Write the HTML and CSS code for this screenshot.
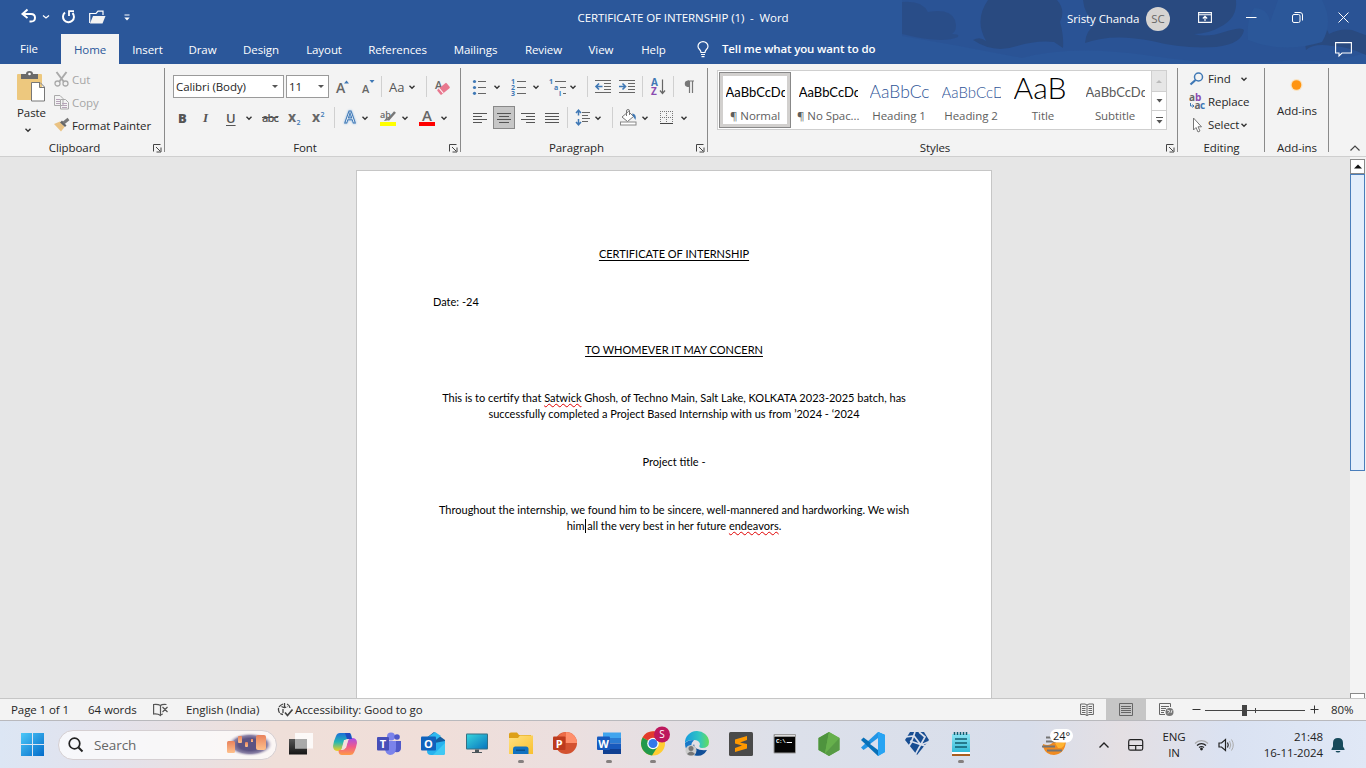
FILE: index.html
```html
<!DOCTYPE html>
<html lang="en">
<head>
<meta charset="utf-8">
<title>CERTIFICATE OF INTERNSHIP (1) - Word</title>
<link rel="stylesheet" href="styles.css">
</head>
<body>
<svg width="0" height="0" class="defs">
  <defs>
    <symbol id="chev" viewBox="0 0 8 8"><path d="M1.5 2.8 4 5.2 6.5 2.8" fill="none" stroke="#333" stroke-width="1.4"/></symbol>
    <symbol id="launch" viewBox="0 0 9 9"><path d="M.5 7.5V.5H7.5M3 3l4 4M8 3.5V8H3.5" fill="none" stroke="#444"/></symbol>
  </defs>
</svg>
<header class="header">
  <svg class="header-art" width="466" height="64" viewBox="0 0 466 64">
    <path d="M0 0H466V52Q430 64 390 60Q330 68 250 56T120 58Q60 46 0 36Z" fill="#2a5191" opacity=".55"/>
    <g fill="#294a80">
      <path d="M0 2Q20 0 26 12Q48 8 53 20Q56 30 50 34Q58 34 56 37Q40 44 0 34Z" opacity=".6"/>
      <path d="M86 0H155Q164 10 158 22Q162 36 161 48L152 42Q135 40 115 46Q92 54 71 40Q78 36 84 41Q72 20 86 0Z"/>
      <path d="M181 0H334Q336 18 318 27Q306 34 292 34Q305 38 322 32Q340 26 342 30Q340 44 314 47Q280 49 250 41Q210 33 183 43Q184 30 194 24Q182 14 181 0Z"/>
      <path d="M404 50Q400 30 416 26Q424 25 427 34Q438 28 450 30L466 36V56Q445 46 430 46Q412 43 404 50Z"/>
    </g>
    <path d="M376 0H420Q432 22 420 42Q380 54 346 40Q344 20 352 8Q366 8 368 22Z" fill="#2b5799"/>
  </svg>
  <div class="titlebar">
    <div class="quick">
      <svg width="16" height="16" viewBox="0 0 16 16"><path d="M2 5h8q4 0 4 3.800t-4 3.700H8.500" fill="none" stroke="#fff" stroke-width="2"/><path d="M6.500 .5 1.500 5l5 4" fill="none" stroke="#fff" stroke-width="2"/></svg>
      <svg width="8" height="8" viewBox="0 0 8 8"><path d="M1 2.500 4 5 7 2.500" fill="none" stroke="#fff" stroke-width="1.300"/></svg>
      <svg width="15" height="16" viewBox="0 0 15 16"><path d="M4 3.500A5.500 5.500 0 1 0 11.500 4" fill="none" stroke="#fff" stroke-width="2"/><path d="M8 7V2.200H13" fill="none" stroke="#fff" stroke-width="1.800"/></svg>
      <svg width="17" height="14" viewBox="0 0 17 14"><path d="M.7 13V3.500H7L9 1.200h5V5" fill="none" stroke="#fff" stroke-width="1.200"/><path d="M4 6h12.500L13.500 13.500H1Z" fill="#f3f3f3"/></svg>
      <svg width="6" height="7" viewBox="0 0 6 7"><path d="M.5 1H5.500" stroke="#fff"/><path d="M.3 3.500H5.700L3 6.500Z" fill="#fff"/></svg>
    </div>
    <div class="doc-title">CERTIFICATE OF INTERNSHIP (1)&nbsp; -&nbsp; Word</div>
    <div class="window">
      <span class="user">Sristy Chanda</span>
      <span class="avatar">SC</span>
      <svg width="14" height="11" viewBox="0 0 14 11"><path d="M.6 .6H13.400V10.400H.6ZM.6 2.800H13.400M7 9V4.500M4.800 6.500 7 4.300 9.200 6.500" fill="none" stroke="#fff" stroke-width="1.100"/></svg>
      <svg width="11" height="11" viewBox="0 0 11 11"><path d="M0 5.500H10.500" stroke="#fff"/></svg>
      <svg width="11" height="11" viewBox="0 0 11 11"><path d="M.5 4q0-1.500 1.500-1.500H6.500q1.500 0 1.500 1.500v5q0 1.500-1.500 1.500H2Q.5 10.500.5 9ZM2.500.5H8q2.500 0 2.500 2.500V8.500" fill="none" stroke="#fff"/></svg>
      <svg width="11" height="11" viewBox="0 0 11 11"><path d="M.5.5l10 10M10.500.5l-10 10" stroke="#fff"/></svg>
    </div>
  </div>
  <nav class="tabs">
    <span class="file">File</span><span class="active">Home</span><span>Insert</span><span>Draw</span><span>Design</span><span>Layout</span><span>References</span><span>Mailings</span><span>Review</span><span>View</span><span>Help</span>
    <svg class="bulb" width="12" height="17" viewBox="0 0 12 17"><path d="M4 11.500Q4 10 2.600 8.500Q1 7 1 5.300A5 4.600 0 0 1 11 5.300Q11 7 9.400 8.500Q8 10 8 11.500ZM4 13.500H8M4.500 15.700H7.500" fill="none" stroke="#fff" stroke-width="1.200"/></svg>
    <span class="tell">Tell me what you want to do</span>
    <svg class="comment" width="17" height="15" viewBox="0 0 17 15"><path d="M.6.600H16.400V11H7L4 14V11H.6Z" fill="none" stroke="#fff" stroke-width="1.100"/></svg>
  </nav>
</header>

<section class="ribbon">
  <div class="group clipboard">
    <div class="clip-body">
      <div class="paste">
        <svg width="29" height="31" viewBox="0 0 29 31"><rect y="3" width="25" height="26" rx="1" fill="#edc87e"/><path d="M4 3h5q0-3 3.500-3T16 3h5v5H4Z" fill="#6a6a6a"/><circle cx="12.500" cy="3" r="1.300" fill="#fff"/><path d="M14.500 11.500H23L27.500 16V30H14.500ZM22.500 11.500V16.500H27.500" fill="#fff" stroke="#777"/></svg>
        <span>Paste</span>
        <svg width="8" height="8"><use href="#chev"/></svg>
      </div>
      <div class="clip-list">
        <div class="off"><svg width="15" height="15" viewBox="0 0 15 15"><path d="M2.500 0 10 10M12.500 0 5 10" stroke="#aaa" stroke-width="2"/><circle cx="3.500" cy="11.500" r="2.500" fill="none" stroke="#aaa" stroke-width="1.300"/><circle cx="11.500" cy="11.500" r="2.500" fill="none" stroke="#aaa" stroke-width="1.300"/></svg><span>Cut</span></div>
        <div class="off"><svg width="16" height="15" viewBox="0 0 16 15"><path d="M.5.500H6L9 3.500V10.500H.5ZM6.500 4.500H11.500L14.500 7.500V14H6.500Z" fill="#f3f3f3" stroke="#aaa"/><path d="M2 4.500h4M2 6.500h4M2 8.500h4M8 8.500h5M8 10.500h5M8 12.500h5" stroke="#b7a4b9"/></svg><span>Copy</span></div>
        <div><svg width="16" height="15" viewBox="0 0 16 15"><path d="M0 6 6 3.500 10.500 9 7 13.500Z" fill="#eac282"/><path d="M6 4.500 8 2.500 12.500 7.500 11 9Z" fill="#666"/><path d="M9.500 5 14.500 1" stroke="#777" stroke-width="3"/></svg><span>Format Painter</span></div>
      </div>
    </div>
    <div class="label">Clipboard</div><svg class="launcher" width="9" height="9"><use href="#launch"/></svg>
  </div>

  <div class="group font">
    <div class="tools">
      <div class="row font-one">
        <div class="combo">Calibri (Body)<i></i></div>
        <div class="combo size">11<i></i></div>
        <svg width="14" height="16" viewBox="0 0 14 16"><text x="0" y="14" class="g g13">A</text><path d="M8 4.500h5L10.500 1.500Z" fill="#3f78b5"/></svg>
        <svg width="14" height="16" viewBox="0 0 14 16"><text x="1" y="14" class="g g11">A</text><path d="M8.500 1h5L11 4Z" fill="#3f78b5"/></svg>
        <b class="sep"></b>
        <span class="aa">Aa</span>
        <svg width="8" height="8"><use href="#chev"/></svg>
        <b class="sep"></b>
        <svg width="16" height="16" viewBox="0 0 16 16"><text x="1" y="10" class="g g11">A</text><g transform="rotate(-40 9 10)"><rect x="3.500" y="7" width="12" height="6.500" rx="1" fill="#e8788f"/><path d="M6.500 7V13.500" stroke="#fff"/></g></svg>
      </div>
      <div class="row font-two">
        <span class="bold">B</span><span class="ital">I</span><span class="under">U</span>
        <svg width="8" height="8"><use href="#chev"/></svg>
        <span class="strike">abc</span>
        <svg width="14" height="16" viewBox="0 0 14 16"><text x="0" y="12" class="g g13 gb">x</text><text x="8.500" y="15" class="g g7">2</text></svg>
        <svg width="14" height="16" viewBox="0 0 14 16"><text x="0" y="12" class="g g13 gb">x</text><text x="8.500" y="7" class="g g7">2</text></svg>
        <b class="sep"></b>
        <svg width="16" height="18" viewBox="0 0 16 18"><text x="2.800" y="14" class="effect">A</text></svg>
        <svg width="8" height="8"><use href="#chev"/></svg>
        <svg width="17" height="18" viewBox="0 0 17 18"><text x="0" y="9" class="g g9">ab</text><path d="M15 3 8 11" stroke="#777" stroke-width="2.500"/><path d="M4 12 6.500 8.500 9.500 11Z" fill="#777"/><rect y="13" width="16" height="4" fill="#ff0"/></svg>
        <svg width="8" height="8"><use href="#chev"/></svg>
        <svg width="17" height="18" viewBox="0 0 17 18"><text x="3" y="12" class="g g15">A</text><rect y="13" width="16" height="4" fill="red"/></svg>
        <svg width="8" height="8"><use href="#chev"/></svg>
      </div>
    </div>
    <div class="label">Font</div><svg class="launcher" width="9" height="9"><use href="#launch"/></svg>
  </div>

  <div class="group para">
    <div class="tools">
      <div class="row para-one">
        <svg width="16" height="16" viewBox="0 0 16 16"><path d="M6 2.500H14M6 8.500H14M6 14.500H14" stroke="#666"/><g fill="#3f78b5"><circle cx="2.500" cy="2.500" r="1.600"/><circle cx="2.500" cy="8.500" r="1.600"/><circle cx="2.500" cy="14.300" r="1.600"/></g></svg>
        <svg width="8" height="8"><use href="#chev"/></svg>
        <svg width="16" height="18" viewBox="0 0 16 18"><path d="M6 3.500H15M6 9.500H15M6 15.500H15" stroke="#666"/><g class="num"><text x="0" y="6">1</text><text x="0" y="12">2</text><text x="0" y="18">3</text></g></svg>
        <svg width="8" height="8"><use href="#chev"/></svg>
        <svg width="18" height="18" viewBox="0 0 18 18"><path d="M6 3.500H17M11 9.500H17M14 15.500H17" stroke="#666"/><g class="num"><text x="0" y="6">1</text><text x="5" y="12">a</text><text x="10" y="18">i</text></g></svg>
        <svg width="8" height="8"><use href="#chev"/></svg>
        <b class="sep"></b>
        <svg width="17" height="14" viewBox="0 0 17 14"><path d="M0 .5H16M9 3.500H16M9 6.500H16M9 9.500H16M0 12.500H16" stroke="#666"/><path d="M7.500 6.500H1.500M4 3.500 1 6.500 4 9.500" fill="none" stroke="#3f78b5" stroke-width="1.600"/></svg>
        <svg width="17" height="14" viewBox="0 0 17 14"><path d="M0 .5H16M9 3.500H16M9 6.500H16M9 9.500H16M0 12.500H16" stroke="#666"/><path d="M0 6.500H6M3.500 3.500 6.500 6.500 3.500 9.500" fill="none" stroke="#3f78b5" stroke-width="1.600"/></svg>
        <b class="sep"></b>
        <svg width="16" height="18" viewBox="0 0 16 18"><text x="0" y="8" class="sort-a">A</text><text x="0" y="17" class="sort-z">Z</text><path d="M11.500 1.500V15.500M9 12.500 11.500 15.500 14 12.500" fill="none" stroke="#666" stroke-width="1.200"/></svg>
        <b class="sep"></b>
        <svg width="12" height="14" viewBox="0 0 12 14"><path d="M6.500 1V13M9.500 1V13M5 1H11" stroke="#777" stroke-width="1.200"/><path d="M6 .5H4.500A3.300 3.300 0 0 0 4.500 7H6Z" fill="#777"/></svg>
      </div>
      <div class="row para-two">
        <svg width="16" height="12" viewBox="0 0 16 12"><path d="M1 1.500H15M1 4.500H10M1 7.500H15M1 10.500H10" stroke="#555"/></svg>
        <span class="pressed"><svg width="16" height="12" viewBox="0 0 16 12"><path d="M1 1.500H15M3 4.500H13M1 7.500H15M3 10.500H13" stroke="#555"/></svg></span>
        <svg width="16" height="12" viewBox="0 0 16 12"><path d="M1 1.500H15M6 4.500H15M1 7.500H15M6 10.500H15" stroke="#555"/></svg>
        <svg width="16" height="12" viewBox="0 0 16 12"><path d="M1 1.500H15M1 4.500H15M1 7.500H15M1 10.500H15" stroke="#555"/></svg>
        <b class="sep"></b>
        <svg width="16" height="17" viewBox="0 0 16 17"><path d="M7 3.500H15M7 6.500H13M7 9.500H15M7 12.500H13" stroke="#666"/><path d="M3.500 1.500V6.500M1 4 3.500 1.200 6 4M3.500 10V15.500M1 13 3.500 15.800 6 13" fill="none" stroke="#3f78b5" stroke-width="1.500"/></svg>
        <svg width="8" height="8"><use href="#chev"/></svg>
        <b class="sep"></b>
        <svg width="17" height="17" viewBox="0 0 17 17"><path d="M2 8 8.500 2.500 13.500 7.500 7.500 12.500Z" fill="#fff" stroke="#777"/><path d="M6.500 7V2Q6.500 .5 8 .5T9.500 2V6" fill="none" stroke="#777"/><path d="M12 4.500Q17 5 15.500 11L13.500 8Z" fill="#3f78b5"/><rect x=".5" y="13" width="15.500" height="3" fill="#fff" stroke="#888"/></svg>
        <svg width="8" height="8"><use href="#chev"/></svg>
        <svg width="15" height="15" viewBox="0 0 15 15"><path d="M1 1.500H14M1 7.500H14M1.500 1V13M7.500 1V13M13.500 1V13" stroke="#777" stroke-dasharray="1 1"/><path d="M1 13.500H14" stroke="#444"/></svg>
        <svg width="8" height="8"><use href="#chev"/></svg>
      </div>
    </div>
    <div class="label">Paragraph</div><svg class="launcher" width="9" height="9"><use href="#launch"/></svg>
  </div>

  <div class="group styles">
    <div class="gallery">
      <div class="style chosen"><p>AaBbCcDd</p><span>¶ Normal</span></div>
      <div class="style"><p>AaBbCcDd</p><span>¶ No Spac...</span></div>
      <div class="style h1"><p>AaBbCc</p><span>Heading 1</span></div>
      <div class="style h2"><p>AaBbCcD</p><span>Heading 2</span></div>
      <div class="style ttl"><p>AaB</p><span>Title</span></div>
      <div class="style sub"><p>AaBbCcDd</p><span>Subtitle</span></div>
      <div class="gal-scroll">
        <span class="dim"><svg width="7" height="4" viewBox="0 0 7 4"><path d="M0 4H6L3 1Z" fill="#bbb"/></svg></span>
        <span><svg width="7" height="4" viewBox="0 0 7 4"><path d="M.5 0H6.500L3.500 3.500Z" fill="#555"/></svg></span>
        <span><svg width="7" height="7" viewBox="0 0 7 7"><path d="M0 .5H7" stroke="#555"/><path d="M.5 3H6.500L3.500 6.500Z" fill="#555"/></svg></span>
      </div>
    </div>
    <div class="label">Styles</div><svg class="launcher" width="9" height="9"><use href="#launch"/></svg>
  </div>

  <div class="group editing">
    <div class="edit-list">
      <div><svg width="16" height="14" viewBox="0 0 16 14"><circle cx="9.500" cy="5" r="4" fill="none" stroke="#3f78b5" stroke-width="1.500"/><path d="M6.500 8 1.500 12.500" stroke="#3f78b5" stroke-width="2.200"/></svg><span>Find</span><svg width="8" height="8"><use href="#chev"/></svg></div>
      <div><svg width="17" height="18" viewBox="0 0 17 18"><text x="0" y="8" class="g g10 gb">a</text><text x="6" y="8" class="rb">b</text><text x="5.500" y="16" class="g g10 gb">a</text><text x="11" y="16" class="rc">c</text><path d="M1.500 10V13H5M3.500 11.500 5 13 3.500 14.500" fill="none" stroke="#3f78b5"/></svg><span>Replace</span></div>
      <div><svg width="16" height="16" viewBox="0 0 16 16"><path d="M4.500 1V13L7 10.500 9 15 11 14 9 9.800H12.500Z" fill="#fff" stroke="#777"/></svg><span>Select</span><svg width="8" height="8"><use href="#chev"/></svg></div>
    </div>
    <div class="label">Editing</div>
  </div>

  <div class="group addins">
    <div class="add"><svg width="14" height="14" viewBox="0 0 14 14"><circle cx="6.500" cy="7" r="6" fill="#ffd28a" opacity=".5"/><circle cx="6.500" cy="7" r="4.800" fill="#ff9410"/></svg><span>Add-ins</span></div>
    <div class="label">Add-ins</div>
  </div>
  <div class="collapse"><svg width="12" height="8" viewBox="0 0 12 8"><path d="M1.500 6.500 6 2 10.500 6.500" fill="none" stroke="#444" stroke-width="1.200"/></svg></div>
</section>

<main class="work">
  <article class="page">
    <p class="c"><u class="l1">CERTIFICATE OF INTERNSHIP</u></p>
    <p class="l2">Date: -24</p>
    <p class="c"><u class="l3">TO WHOMEVER IT MAY CONCERN</u></p>
    <p class="c"><span class="l4">This is to certify that <span class="err">Satwick</span> Ghosh, of Techno Main, Salt Lake, KOLKATA 2023-2025 batch, has</span><br><span class="l5">successfully completed a Project Based Internship with us from ’2024 - ‘2024</span></p>
    <p class="c"><span class="l6">Project title -</span></p>
    <p class="c"><span class="l7">Throughout the internship, we found him to be sincere, well-mannered and hardworking. We wish</span><br><span class="l8">him<i class="caret"></i> all the very best in her future <span class="err">endeavors</span>.</span></p>
  </article>
  <div class="scroll">
    <span class="arrow"><svg width="8" height="5" viewBox="0 0 8 5"><path d="M0 4.500H8L4 .5Z" fill="#111"/></svg></span>
    <span class="thumb"></span>
    <span class="arrow"><svg width="8" height="5" viewBox="0 0 8 5"><path d="M0 .5H8L4 4.500Z" fill="#111"/></svg></span>
  </div>
</main>

<footer class="status">
  <span class="s1">Page 1 of 1</span><span class="s2">64 words</span>
  <svg width="16" height="14" viewBox="0 0 16 14"><path d="M7.500 2.500V12.500M7.500 2.500Q5 1 .6 1.500V11Q5 10.500 7.500 12.500Q8.500 11 10 11M7.500 2.500Q9 1 13.500 1.500M9.500 4 14.500 9M14.500 4 9.500 9" fill="none" stroke="#555" stroke-width="1.200"/></svg>
  <span class="s3">English (India)</span>
  <svg width="17" height="16" viewBox="0 0 17 16"><path d="M6 2Q1 4 1.500 8T6 12.500M10 2Q12.500 3 13 6M7.500 1V6M4.500 4.500Q7.500 6.500 10.500 4.500M6 11V7" fill="none" stroke="#444" stroke-width="1.300" stroke-dasharray="5 1"/><path d="M8 10.500 10.500 13.500 15.500 7.500" fill="none" stroke="#444" stroke-width="1.700"/></svg>
  <span class="s4">Accessibility: Good to go</span>
  <svg width="14" height="14" viewBox="0 0 14 14"><path d="M7 2V13M.6 1H5L7 2 9 1H13.400V11.500H9L7 12.500 5 11.500H.6ZM2 3.500H5.500M2 5.500H5.500M2 7.500H5.500M2 9.500H5.500M8.500 3.500H12M8.500 5.500H12M8.500 7.500H12M8.500 9.500H12" fill="none" stroke="#666"/></svg>
  <span class="view"><svg width="14" height="14" viewBox="0 0 14 14"><path d="M.5.500H13.500V12.500H.5ZM2 3.500H12M2 5.500H12M2 7.500H12M2 9.500H12" fill="none" stroke="#666"/></svg></span>
  <svg width="15" height="14" viewBox="0 0 15 14"><path d="M6 11.500H.5V.5H11.500V4M2 3.500H10M2 5.500H7M2 7.500H6M2 9.500H5" fill="none" stroke="#666"/><circle cx="10.500" cy="9" r="4" fill="#777"/><path d="M8 7 11 8 9 10.500M13 7 12 10" stroke="#ddd" fill="none"/></svg>
  <svg width="9" height="9" viewBox="0 0 9 9"><path d="M.5 4.500H8.500" stroke="#333"/></svg>
  <svg width="101" height="12" viewBox="0 0 101 12"><path d="M0 6.500H100M50.500 4V9" stroke="#444"/><rect x="37" y="1" width="5" height="11" fill="#444"/></svg>
  <svg width="9" height="9" viewBox="0 0 9 9"><path d="M.5 4.500H8.500M4.500.5V8.500" stroke="#333"/></svg>
  <span class="s5">80%</span>
</footer>

<div class="taskbar">
  <svg class="start" width="24" height="24" viewBox="0 0 24 24"><defs><linearGradient id="wg" x1="0" y1="0" x2="24" y2="24" gradientUnits="userSpaceOnUse"><stop stop-color="#4cc8f8"/><stop offset="1" stop-color="#0067c8"/></linearGradient></defs><path d="M0 0h11v11H0ZM12 0h11v11H12ZM0 12h11v11H0ZM12 12h11v11H12Z" fill="url(#wg)"/></svg>
  <div class="search">
    <svg width="16" height="16" viewBox="0 0 16 16"><circle cx="6.500" cy="6.500" r="5.300" fill="none" stroke="#222" stroke-width="1.700"/><path d="M10.500 10.500 14.500 14.500" stroke="#222" stroke-width="1.900"/></svg>
    <span>Search</span>
    <svg class="lantern" width="48" height="26" viewBox="0 0 48 26"><defs><radialGradient id="ng"><stop offset=".5" stop-color="#5d5382"/><stop offset=".75" stop-color="#8b82a6"/><stop offset="1" stop-color="#f6f0f0" stop-opacity="0"/></radialGradient><linearGradient id="lg" x2="0" y2="1"><stop stop-color="#e8825c"/><stop offset="1" stop-color="#ffc18c"/></linearGradient></defs><ellipse cx="25" cy="12.500" rx="23" ry="12" fill="url(#ng)"/><g fill="url(#lg)"><rect x="2" y="9" width="8" height="12" rx="1.500"/><rect x="13" y="4" width="4" height="7" rx="1"/><rect x="20" y="10" width="3" height="5" rx="1"/><rect x="26" y="7" width="2" height="3"/><rect x="31" y="3" width="10" height="15" rx="2"/></g></svg>
  </div>
  <div class="apps">
    <svg viewBox="0 0 24 24"><defs><linearGradient id="tv" x2="0" y2="1"><stop stop-color="#555"/><stop offset="1" stop-color="#151515"/></linearGradient></defs><rect y="7" width="18" height="15.500" fill="url(#tv)"/><rect x="6" y="1" width="18" height="15.500" fill="#fff" opacity=".8"/><path d="M6 7H18V16.500H6Z" fill="#999" opacity=".75"/></svg>
    <svg viewBox="0 0 24 24"><defs><linearGradient id="c1" x2="0" y2="1"><stop stop-color="#1c6fd8"/><stop offset=".5" stop-color="#25b7b4"/><stop offset="1" stop-color="#f2cf20"/></linearGradient><linearGradient id="c2" x2="0" y2="1"><stop stop-color="#a64fe8"/><stop offset=".5" stop-color="#ef5a8c"/><stop offset="1" stop-color="#ff9a45"/></linearGradient></defs><path d="M7 1H16Q18 1 18.500 4L19 7H14Q12 7 11 10L9 16Q8 19 5 19Q0 19 0 14Q1 8 3 4Q4 1 7 1Z" fill="url(#c1)"/><path d="M17 23H9Q6 23 5.500 19.500L6 18H10Q12 18 13 15L15 9Q16 6 19 6Q24 6 24 11Q23 17 21 20.500Q20 23 17 23Z" fill="url(#c2)"/><path d="M11 8H15L13 16H9Z" fill="#f4e1dc"/><path d="M12 1H17L19 7H14Z" fill="#224bc0"/></svg>
    <svg viewBox="0 0 24 24"><circle cx="14" cy="4.500" r="4" fill="#7b83eb"/><circle cx="20" cy="5" r="2.800" fill="#5059c9"/><path d="M15 9H24V16Q24 21 18 20Z" fill="#5059c9"/><path d="M8 9H19V16Q19 23 13 23Q8 22 8 16Z" fill="#7b83eb"/><rect y="5" width="12" height="13.500" rx="1" fill="#464eb8"/><text x="6" y="16" class="tile">T</text></svg>
    <svg viewBox="0 0 24 24"><path d="M4 7 13 0 24 8V12L14 17Z" fill="#155d9f"/><path d="M7 5 14 0 20 4 12 10Z" fill="#2fb9ef"/><path d="M8 12 24 9V21Q24 23 22 23H10Q6 23 6 19Z" fill="#28b2ee"/><path d="M24 11V21Q24 23 22 23H12Z" fill="#40c9f4"/><rect y="4.500" width="15" height="14" rx="1" fill="#0f62bd"/><text x="7.500" y="16" class="tile">O</text></svg>
    <svg viewBox="0 0 24 24"><defs><linearGradient id="mo" x2="1" y2="1"><stop stop-color="#38d4dc"/><stop offset="1" stop-color="#0876bf"/></linearGradient></defs><rect x="1" y="1.500" width="22" height="16" rx="1" fill="#356f83"/><rect x="2" y="2.500" width="20" height="14" fill="url(#mo)"/><path d="M10 17.500h4v2.500h3v1H7v-1h3Z" fill="#4b555a"/></svg>
    <svg viewBox="0 0 24 24"><defs><linearGradient id="fo" x2="1" y2="1"><stop stop-color="#ffe180"/><stop offset="1" stop-color="#f9c02f"/></linearGradient></defs><path d="M0 2Q0 .5 2 .5H8L10 3H22V8H0Z" fill="#dda018"/><path d="M0 6H9L11 3.500H24V22H0Z" fill="url(#fo)"/><path d="M4 22V17Q4 14.500 6 14.500H17Q19.500 14.500 19.500 17V22Z" fill="#1272c0"/><path d="M7 17.500H16V19H7Z" fill="#0b528e"/></svg>
    <svg viewBox="0 0 24 24"><circle cx="13" cy="11" r="11" fill="#d35230"/><path d="M13 0A11 11 0 0 1 24 11H13Z" fill="#ff8f6b"/><path d="M13 0V11H3A11 11 0 0 1 13 0Z" fill="#ed6c47"/><rect y="4.500" width="12.500" height="13.500" rx="1" fill="#bd3b1e"/><text x="6.300" y="16" class="tile">P</text></svg>
    <svg viewBox="0 0 24 24"><path d="M6 .5H24V6H6Z" fill="#41a5ee"/><path d="M6 6H24V11.500H6Z" fill="#2b7cd3"/><path d="M6 11.500H24V17H6Z" fill="#185abd"/><path d="M6 17H24V22H6Z" fill="#103f91"/><rect y="4.500" width="13" height="13.500" rx="1" fill="#185abd"/><text x="6.500" y="15.700" class="tile">W</text></svg>
    <svg viewBox="0 0 24 24"><circle cx="12" cy="11.500" r="12" fill="#ffcd32"/><path d="M12 11.500 1.600 5.500A12 12 0 0 1 23 6H12Z" fill="#e33b2e"/><path d="M12 11.500 1.600 5.500A12 12 0 0 0 11 23.500L17 14Z" fill="#21994b"/><circle cx="12" cy="11.500" r="5.800" fill="#fff"/><circle cx="12" cy="11.500" r="4.500" fill="#3378e8"/><circle cx="21" cy="2.500" r="8" fill="#bd185d"/><text x="21" y="6.300" class="badge">S</text></svg>
    <svg viewBox="0 0 24 24"><defs><linearGradient id="eg"><stop stop-color="#169bdf"/><stop offset=".6" stop-color="#31c6c1"/><stop offset="1" stop-color="#65dc5b"/></linearGradient></defs><path d="M0 11A12 11.500 0 0 1 24 10Q24 16 17 16Q13 16 15 12Q14 8 9 8Q2 8 0 11Z" fill="url(#eg)"/><path d="M0 11Q3 8 9 8Q4 13 8 20L12 24Q0 22 0 11Z" fill="#1878c8"/><path d="M9 12Q9 19 22 18Q18 25 11 23.500Q4 20 9 12Z" fill="#114f98"/><circle cx="6" cy="18.500" r="5.500" fill="#ccc"/><circle cx="6" cy="16.500" r="2.500" fill="#777"/><path d="M2 22Q6 17 10 22Q6 25 2 22Z" fill="#777"/></svg>
    <svg viewBox="0 0 24 24"><rect width="24" height="24" rx="1.500" fill="#4a4a4a"/><path d="M18 4V8L11 10.500 18 12V16.500L6 20V16L13 13.500 6 11.500V7.500Z" fill="#ff9800"/></svg>
    <svg viewBox="0 0 24 24"><rect x=".5" y="2" width="22.500" height="19.500" rx="1" fill="#999"/><rect x="1.500" y="5" width="20.500" height="15.500" fill="#050505"/><path d="M2 3.500H22" stroke="#ddd"/><text x="3" y="11" class="prompt">C:\.</text><path d="M14 10.500H19" stroke="#fff"/></svg>
    <svg viewBox="0 0 24 24"><path d="M12 0 22.500 6V18L12 24 1.500 18V6Z" fill="#6aaf50"/><path d="M12 0 1.500 6V18L8 21.500Z" fill="#4e943e"/><path d="M12 0 22.500 6 8 21.500Z" fill="#66b04c"/><path d="M22.500 6V18L12 24 8 21.500Z" fill="#579b45"/></svg>
    <svg viewBox="0 0 24 24"><path d="M17 0 24 3V20L17 24Z" fill="#28a4f3"/><path d="M17 0 24 3 2.500 18 0 15.500Z" fill="#2295e6"/><path d="M2.500 5.500 20 18.500 17 24 0 8Z" fill="#0870b8"/><path d="M17 6V18L9 12Z" fill="#d9dfee"/><path d="M17 0 24 3V20L17 24Z" fill="#28a4f3"/></svg>
    <svg viewBox="0 0 24 24"><path d="M5 0H19L24 8 12 23 0 8Z" fill="#174d92"/><path d="M0 5 9 4 16 13 23 10M10 0 6 11 4 14M14 0 20 5 10 23M5 9 20 14" fill="none" stroke="#d9dfec" stroke-width="1.700"/></svg>
    <svg viewBox="0 0 24 24"><defs><linearGradient id="np" x2="0" y2="1"><stop stop-color="#8be4f3"/><stop offset="1" stop-color="#2db9d7"/></linearGradient></defs><path d="M3 2H21V21H3Z" fill="url(#np)"/><path d="M5.500 0V3M8.500 0V3M11.500 0V3M14.500 0V3M17.500 0V3M6 7H18M6 11H18M6 15H18" stroke="#125d70" stroke-width="1.500"/><path d="M3 20H21V22H3Z" fill="#fff"/><path d="M3 22H21V24H3Z" fill="#a95e20"/></svg>
    <i class="dot d6"></i><i class="dot d8"></i><i class="dot d9"></i><i class="dot d16"></i>
  </div>
  <div class="tray">
    <svg width="32" height="32" viewBox="0 0 32 32"><path d="M1 15Q8 18 12 12 17 8 24 12Q23 25 12 26Q4 26 1 18Z" fill="#f08b21"/><path d="M13 14Q20 14 23 12Q23 20 16 19Z" fill="#ffb431"/><path d="M4 8.500H14M4 12.500H14M0 17.500H13M5 21.500H20" stroke="#747474" stroke-width="2"/><rect x="8" y="0" width="23" height="13.500" rx="6.500" fill="#fff"/><text x="19.500" y="11" class="temp">24°</text></svg>
    <svg width="12" height="8" viewBox="0 0 12 8"><path d="M1.500 6.500 6 2 10.500 6.500" fill="none" stroke="#222" stroke-width="1.400"/></svg>
    <svg width="16" height="12" viewBox="0 0 16 12"><rect x=".7" y=".7" width="14" height="10.500" rx="1.800" fill="none" stroke="#222" stroke-width="1.200"/><path d="M.7 6.500H14.700M7.700 6.500V11" stroke="#222" stroke-width="1.200"/></svg>
    <span class="lang">ENG<br>IN</span>
    <svg width="16" height="14" viewBox="0 0 16 14"><g fill="none" stroke-width="1.200"><path d="M1 5.500A9 9 0 0 1 14 5.500" stroke="#aaa"/><path d="M3 7.500A6.500 6.500 0 0 1 12 7.500M5 9.500A4 4 0 0 1 10 9.500" stroke="#222"/></g><circle cx="7.500" cy="11" r="1.400" fill="#222"/></svg>
    <svg width="17" height="14" viewBox="0 0 17 14"><path d="M1 5H3.500L7.500 1.500V12.500L3.500 9H1ZM9.500 4.500Q11 7 9.500 9.500" fill="none" stroke="#222" stroke-width="1.200"/><path d="M11.500 3Q14 7 11.500 11M13.500 1.500Q17 7 13.500 12.500" fill="none" stroke="#aaa"/></svg>
    <span class="clock">21:48<br>16-11-2024</span>
    <svg width="14" height="16" viewBox="0 0 14 16"><path d="M2 6Q2 1 7 1T12 6V9.500L13.500 12V13H.5V12L2 9.500ZM4.500 14H9.500Q9 15.500 7 15.500T4.500 14Z" fill="#174a5b"/></svg>
  </div>
</div>
</body>
</html>
```
FILE: styles.css
```css
* { box-sizing: border-box; }
body { margin: 0; width: 1366px; height: 768px; overflow: hidden; display: grid; grid-template-rows: 64px 93px 541px 22px 48px; font: 11.5px/16px "Open Sans", "Noto Sans", sans-serif; letter-spacing: -.08px; color: #262626; background: #e6e6e6; }
svg { display: block; flex: none; overflow: visible; }
p { margin: 0; }
.defs { position: absolute; }

/* Header */
.header { position: relative; background: #2b579a; color: #fff; display: grid; grid-template-rows: 34px 30px; }
.header-art { position: absolute; right: 0; top: 0; }
.titlebar { position: relative; display: grid; grid-template-columns: 576px 214px 1fr; align-items: center; }
.quick { display: grid; grid-template-columns: 21px 19px 28px 35px auto; padding-left: 21px; align-items: center; }
.doc-title { text-align: center; white-space: nowrap; padding-top: 2px; }
.window { display: grid; grid-template-columns: 79px 52px 48px 46px 46px auto; padding-left: 277px; align-items: center; height: 30px; }
.user, .avatar { position: relative; top: 2px; white-space: nowrap; }
.avatar { width: 24px; height: 24px; border-radius: 50%; background: #d6d4d2; color: #666; text-align: center; line-height: 24px; }
.tabs { position: relative; display: grid; grid-template-columns: 61px 58px 57px 53px 64px 62px 85px 71px 65px 50px 55px 16px 25px 613px auto; line-height: 31px; text-align: center; }
.file { padding-right: 3px; line-height: 29px; }
.active { background: #f3f3f3; color: #2b579a; }
.bulb { align-self: center; grid-column: 13; margin-left: 0; }
.tell { grid-column: 14; text-align: left; font-weight: 600; line-height: 29px; letter-spacing: -.14px; }
.tabs .bulb { grid-column: 13; }
.comment { align-self: center; }

/* Ribbon */
.ribbon { background: #f3f3f3; border-bottom: 1px solid #cfcfcf; display: grid; grid-template-columns: 165px 296px 247px 470px 87px 64px 39px; }
.group { position: relative; display: grid; grid-template-rows: 76px 16px; }
.group::after { content: ""; position: absolute; right: 0; top: 4px; width: 1px; height: 84px; background: #8a8a8a; }
.label { text-align: center; padding-right: 16px; }
.editing .label, .addins .label { padding-right: 0; }
.launcher { position: absolute; right: 3px; top: 80px; }
.clip-body { display: grid; grid-template-columns: 37px auto; padding: 7px 0 0 17px; }
.paste { display: grid; grid-template-rows: 34px 18px 10px; width: 29px; }
.paste span { justify-self: center; margin-right: 5px; }
.paste svg:last-child { margin: 3px 0 0 7px; }
.clip-list { display: grid; grid-template-rows: 23px 23px 23px; height: 69px; margin-top: -3px; white-space: nowrap; }
.clip-list div { display: grid; grid-template-columns: 18px auto; align-items: center; }
.off { color: #a6a6a6; }
.tools { display: grid; grid-template-rows: 29px 33px; padding-top: 8px; }
.row { display: grid; align-items: center; justify-items: start; white-space: nowrap; }
.font-one { grid-template-columns: 113px 50px 25px 20px 8px 19px 18px 8px 20px; padding-left: 8px; }
.font-two { grid-template-columns: 25px 23px 19px 17px 26px 24px 22px 8px 19px 19px 21px 18px 21px 8px; padding-left: 13px; }
.para-one { grid-template-columns: 21px 18px 21px 17px 20px 18px 8px 24px 23px 9px 22px 10px 14px; padding-left: 11px; }
.para-two { grid-template-columns: 21px 27px 24px 23px 8px 19px 18px 8px 21px 18px 21px 8px; padding-left: 11px; }
.sep { width: 1px; height: 21px; background: #d0d0d0; }
.combo { width: 111px; height: 23px; border: 1px solid #9a9a9a; background: #fff; padding: 0 5px 0 2px; display: flex; align-items: center; justify-content: space-between; }
.combo i { border: 3px solid transparent; border-top-color: #555; border-bottom: 0; }
.size { width: 43px; padding-right: 4px; letter-spacing: 0; }
.g { fill: #666; font-weight: 600; letter-spacing: 0; }
.g13 { font-size: 14px; } .g11 { font-size: 11px; } .g15 { font-size: 15px; } .g9 { font-size: 9px; } .g10 { font-size: 10px; }
.g7 { font-size: 7px; fill: #3f78b5; } .gb { font-weight: 700; }
.aa { font-size: 13px; color: #555; }
.bold { font-weight: 800; font-size: 13px; color: #555; }
.ital { font: italic bold 13px "Liberation Serif", serif; color: #555; }
.under { font-weight: 600; font-size: 13px; color: #555; text-decoration: underline; text-underline-offset: 2px; }
.strike { font-weight: 600; font-size: 11px; letter-spacing: -.9px; color: #555; text-decoration: line-through; }
.effect { font-size: 16px; font-weight: 600; fill: #fff; stroke: #3f78b5; stroke-width: 1; filter: drop-shadow(0 0 1px #8cb8e4); }
.num { font-size: 7px; font-weight: 700; fill: #3f78b5; }
.sort-a { font-size: 10px; font-weight: 700; fill: #3f78b5; }
.sort-z { font-size: 10px; font-weight: 700; fill: #8a4bb0; }
.pressed { width: 22px; height: 23px; background: #c6c6c6; border: 1px solid #888; display: grid; place-items: center; }
.gallery { display: grid; grid-template-columns: repeat(6, 72px) 15px; width: 450px; height: 60px; margin: 6px 0 0 9px; background: #fff; border: 1px solid #cfcfcf; padding-left: 1px; }
.style { display: grid; grid-template-rows: 34px 18px; height: 56px; margin-top: 1px; padding: 2px 6px; justify-items: center; white-space: nowrap; color: #5e5e5e; }
.style p { width: 59px; overflow: hidden; font: 13px/36px Lato, sans-serif; color: #000; letter-spacing: 0; height: 34px; }
.chosen { box-shadow: inset 0 0 0 1px #888, inset 0 0 0 4px #d2d0ce; }
.h1 p { font-size: 17.5px; font-weight: 300; color: #2f5597; }
.h2 p { font-size: 15px; font-weight: 300; color: #2f5597; }
.ttl p { font-size: 30px; font-weight: 300; line-height: 26px; }
.sub p { color: #5a5a5a; }
.gal-scroll { display: grid; grid-template-rows: 20px 19px 19px; border-left: 1px solid #cfcfcf; }
.gal-scroll span { display: grid; place-items: center; }
.gal-scroll span + span { border-top: 1px solid #cfcfcf; }
.dim { background: #e6e6e6; }
.edit-list { display: grid; grid-template-rows: repeat(3, 23px); height: 69px; padding: 3px 0 0 11px; }
.edit-list div { display: grid; grid-template-columns: 19px 32px auto; align-items: center; }
.edit-list div:first-child svg:last-child { margin-left: 0; }
.rb, .rc { font-size: 10px; font-weight: 700; fill: #8a4bb0; } .rc { fill: #3f78b5; }
.add { display: grid; grid-template-rows: 14px 20px; row-gap: 11px; padding-top: 14px; justify-items: center; }
.collapse { display: grid; justify-items: end; align-items: end; padding: 0 7px 4px 0; }

/* Document */
.work { display: grid; grid-template-columns: 1350px 16px; overflow: hidden; }
.page { margin: 13px 0 0 356px; width: 636px; height: 540px; background: #fff; border: 1px solid #c6c6c6; padding: 75px 76px 0; display: flex; flex-direction: column; gap: 32px; font: 11px/16px Lato, Carlito, sans-serif; color: #000; white-space: nowrap; letter-spacing: 0; }
.c { text-align: center; }
.c > span, .c > u { margin: 0 -20px; }
.page u { text-underline-offset: 2px; }
.err { text-decoration: underline wavy #e00000 1px; text-underline-offset: 1px; text-decoration-skip-ink: none; }
.caret { display: inline-block; width: 1px; height: 14px; margin-right: -1px; background: #000; vertical-align: -3px; }
.scroll { display: grid; grid-template-rows: 15px 297px 1fr 15px; padding: 2px 1px 2px 0; background: #f3f3f3; }
.arrow { background: #fff; border: 1px solid #8a8a8a; display: grid; place-items: center; }
.arrow:last-child { grid-row: 4; }
.thumb { background: #e3eefb; border: 1px solid #4a7ebb; }

/* Status bar */
.status { display: grid; grid-template-columns: 77px 65px 33px 91px 18px 785px 26px 53px 33px 13px 105px 21px auto; padding-left: 11px; background: #f3f3f3; border-top: 1px solid #c6c6c6; align-items: center; white-space: nowrap; }
.view { background: #c6c6c6; width: 40px; height: 21px; display: grid; place-items: center; }

/* Taskbar */
.taskbar { border-top: 1px solid #b9b9bd; display: grid; grid-template-columns: 37px 231px 753px 1fr; padding-left: 21px; align-items: center; background: linear-gradient(90deg, #dce6f4 0, #e3e2ec 8%, #efdfd9 20%, #f0ded9 32%, #ebdfdf 42%, #dce0ea 58%, #d8deeb 75%, #e4dfe3 82%, #dae2f2 90%, #e0e8f6 100%); }
.search { width: 219px; height: 30px; border-radius: 15px; border: 1px solid #d5cfd2; background: rgba(255,255,255,.72); display: grid; grid-template-columns: 26px 131px auto; align-items: center; padding-left: 9px; font-size: 13.500px; color: #666; }
.apps { position: relative; display: grid; grid-template-columns: repeat(16, 44px); }
.apps svg { width: 24px; height: 24px; margin-top: -1px; }
.dot { position: absolute; top: 27px; width: 6px; height: 3px; border-radius: 2px; background: #85807f; }
.d6 { left: 229px; } .d8 { left: 317px; } .d9 { left: 361px; } .d16 { left: 669px; }
.tile { font-size: 11px; font-weight: 700; fill: #fff; text-anchor: middle; letter-spacing: 0; }
.badge { font-size: 10px; fill: #fff; text-anchor: middle; letter-spacing: 0; }
.prompt { font: bold 6px "Liberation Mono", monospace; fill: #fff; letter-spacing: -.5px; }
.tray { display: grid; grid-template-columns: 56px 30px 26px 40px 24px 23px 82px 8px auto; align-items: center; font-size: 11.500px; white-space: nowrap; color: #222; }
.tray svg:last-child { grid-column: 9; }
.temp { font-size: 11px; fill: #222; text-anchor: middle; }
.lang { text-align: center; margin-left: 0; }
.clock { text-align: right; grid-column: 7; }
```
